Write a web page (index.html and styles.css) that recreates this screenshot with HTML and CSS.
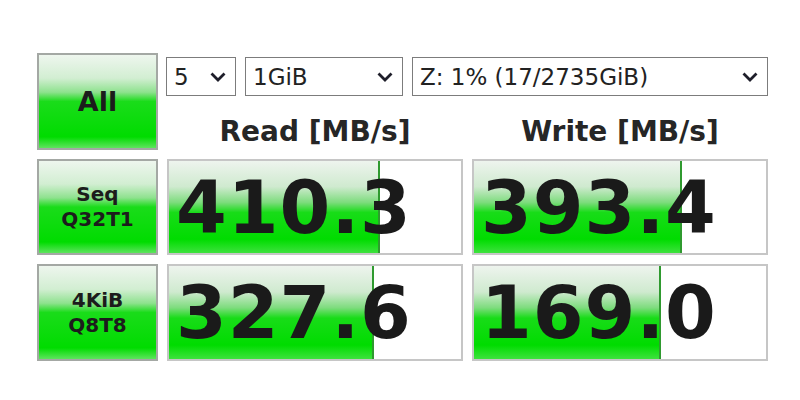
FILE: index.html
```html
<!DOCTYPE html>
<html lang="en">
<head>
    <meta charset="UTF-8">
    <title>Disk Benchmark</title>
    <link rel="stylesheet" href="styles.css">
</head>
<body>
    <main class="bench">
        <!-- run-all button -->
        <div class="btn btn_all">All</div>

        <!-- test settings and column headings -->
        <div class="top">
            <div class="opts">
                <div class="sel sel_count">
                    <span>5</span>
                    <svg class="chev" viewBox="0 0 16 10"><path d="M1.5 1.5 L8 8 L14.5 1.5" /></svg>
                </div>
                <div class="sel sel_size">
                    <span>1GiB</span>
                    <svg class="chev" viewBox="0 0 16 10"><path d="M1.5 1.5 L8 8 L14.5 1.5" /></svg>
                </div>
                <div class="sel sel_drive">
                    <span>Z: 1% (17/2735GiB)</span>
                    <svg class="chev" viewBox="0 0 16 10"><path d="M1.5 1.5 L8 8 L14.5 1.5" /></svg>
                </div>
            </div>
            <div class="heads">
                <div class="head">Read [MB/s]</div>
                <div class="head">Write [MB/s]</div>
            </div>
        </div>

        <!-- sequential row -->
        <div class="btn btn_test">Seq<br>Q32T1</div>
        <div class="val">
            <div class="fill" style="width: 71.5%"></div>
            <span class="num">410.3</span>
        </div>
        <div class="val">
            <div class="fill" style="width: 70.6%"></div>
            <span class="num">393.4</span>
        </div>

        <!-- random 4k row -->
        <div class="btn btn_test">4KiB<br>Q8T8</div>
        <div class="val">
            <div class="fill" style="width: 69.5%"></div>
            <span class="num">327.6</span>
        </div>
        <div class="val">
            <div class="fill" style="width: 63.5%"></div>
            <span class="num">169.0</span>
        </div>
    </main>
</body>
</html>
```

FILE: styles.css
```css
/* page */
body {
    margin: 0;
    background: #fff;
    font-family: "DejaVu Sans", Verdana, sans-serif;
    color: #1c1c1c;
}

/* three column grid: buttons, read, write */
.bench {
    display: grid;
    grid-template-columns: 121px 296px 296px;
    grid-template-rows: 97px 96px 97px;
    column-gap: 9px;
    row-gap: 9px;
    padding: 53px 0 0 37px;
}

/* green buttons on the left */
.btn {
    box-sizing: border-box;
    border: 2px solid #a4a8a4;
    display: flex;
    align-items: center;
    justify-content: center;
    text-align: center;
    font-weight: bold;
    background: linear-gradient(to bottom, #eef6ee 0%, #d2eed2 25%, #8ee28e 40%, #1adc1a 50%, #00dc00 88%, #5ee45e 100%);
}
.btn_all {
    font-size: 27px;
}
.btn_test {
    font-size: 20px;
    line-height: 25px;
}

/* settings row + headings */
.top {
    grid-column: 2 / 4;
    display: flex;
    flex-direction: column;
}
.opts {
    display: flex;
    gap: 9px;
    margin: 4px 0 0 -1px;
}
.sel {
    box-sizing: border-box;
    height: 39px;
    border: 1px solid #7c7c7c;
    display: flex;
    align-items: center;
    justify-content: space-between;
    padding: 0 9px 0 7px;
    font-size: 23px;
    color: #222;
}
.sel_count { width: 70px; }
.sel_size { width: 158px; }
.sel_drive { width: 356px; }
.chev {
    width: 16px;
    height: 10px;
    fill: none;
    stroke: #1e1e2a;
    stroke-width: 2.8;
}

.heads {
    display: grid;
    grid-template-columns: 296px 296px;
    column-gap: 9px;
    margin-top: 19px;
}
.head {
    text-align: center;
    font-size: 28px;
    font-weight: bold;
    color: #262626;
}

/* result cells with a proportional bar */
.val {
    position: relative;
    box-sizing: border-box;
    border: 2px solid #c6c6c6;
    background: #fff;
    display: flex;
    align-items: center;
    overflow: hidden;
}
.fill {
    position: absolute;
    left: 0;
    top: 0;
    bottom: 0;
    border-right: 2px solid #2f9a2f;
    background: linear-gradient(to bottom, #eef4ee 0%, #cfeacf 28%, #7ddc7d 45%, #18dc18 56%, #00dc00 85%, #3ee23e 100%);
}
.num {
    position: relative;
    padding-left: 7px;
    font-size: 73px;
    font-weight: bold;
    color: #1a1a1a;
    letter-spacing: 1px;
}
```
